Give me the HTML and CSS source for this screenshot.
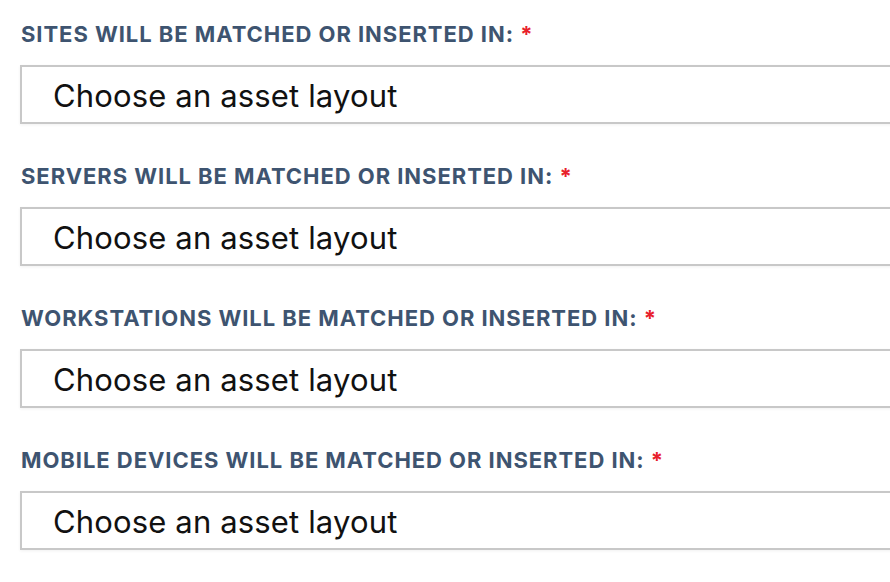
FILE: index.html
```html
<!DOCTYPE html>
<html lang="en">
<head>
<meta charset="UTF-8">
<title>Asset layouts</title>
<link rel="stylesheet" href="styles.css">
</head>
<body>

<div class="form">
    <div class="field">
        <label class="label">SITES WILL BE MATCHED OR INSERTED IN: <span class="req">*</span></label>
        <div class="select">Choose an asset layout</div>
    </div>
    <div class="field">
        <label class="label">SERVERS WILL BE MATCHED OR INSERTED IN: <span class="req">*</span></label>
        <div class="select">Choose an asset layout</div>
    </div>
    <div class="field">
        <label class="label">WORKSTATIONS WILL BE MATCHED OR INSERTED IN: <span class="req">*</span></label>
        <div class="select">Choose an asset layout</div>
    </div>
    <div class="field">
        <label class="label">MOBILE DEVICES WILL BE MATCHED OR INSERTED IN: <span class="req">*</span></label>
        <div class="select">Choose an asset layout</div>
    </div>
</div>

</body>
</html>
```

FILE: styles.css
```css
body {
    margin: 0;
    background: #fff;
    font-family: Inter, "Noto Sans", sans-serif;
    overflow: hidden;
}
.form {
    padding: 21px 0 0 20px;
}
.field {
    height: 142px;
}
.label {
    display: block;
    font-size: 22px;
    line-height: 26px;
    font-weight: 700;
    letter-spacing: 0.95px;
    color: #3e5470;
    padding-left: 1px;
    margin-bottom: 18px;
}
.req {
    color: #e8202a;
}
.select {
    width: 1000px;
    height: 54px;
    padding-top: 1px;
    border: 2px solid #c8c8c8;
    box-shadow: 0 1px 3px rgba(0,0,0,0.06);
    font-size: 31px;
    line-height: 55px;
    letter-spacing: 0.15px;
    padding-left: 31px;
    color: #111;
    overflow: hidden;
}
```
